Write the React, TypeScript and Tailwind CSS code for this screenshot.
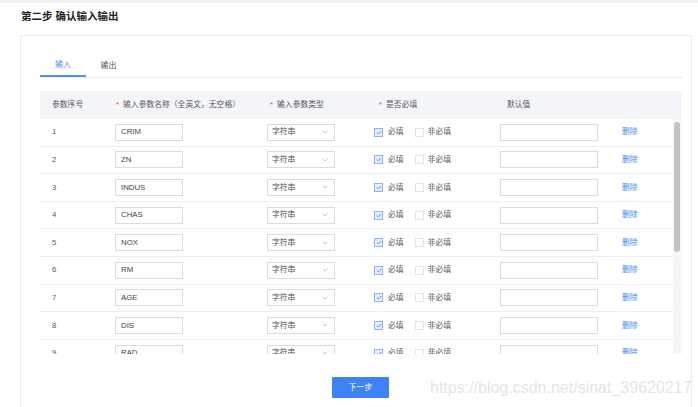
import React from 'react';

const rows = ['CRIM', 'ZN', 'INDUS', 'CHAS', 'NOX', 'RM', 'AGE', 'DIS', 'RAD', 'TAX'];

function Checked() {
  return (
    <span className="flex h-[9px] w-[9px] items-center justify-center border border-[#8fb4f5] bg-[#e6effd]">
      <svg width="6" height="5" viewBox="0 0 6 5" fill="none">
        <path d="M0.8 2.4 L2.4 3.9 L5.2 1" stroke="#4a86f0" strokeWidth="0.9" />
      </svg>
    </span>
  );
}

function Star() {
  return <span className="mr-[4px] text-[#f5475b]">*</span>;
}

export default function App() {
  return (
    <div
      className="h-[407px] w-[698px] overflow-hidden bg-white text-[#333]"
      style={{ fontFamily: '"Liberation Sans", "Noto Sans CJK SC", sans-serif' }}
    >
      <div className="h-[3px] bg-[#f2f2f2]" />
      <div className="flex h-[27px] items-center pl-[21px] text-[10.5px] font-semibold text-[#222]">
        第二步 确认输入输出
      </div>
      <div className="mt-[5px] ml-[20px] h-[375px] w-[672px] border border-[#ececec] bg-white pl-[19px] pr-[8px]">
        {/* tabs */}
        <div className="mt-[19px] flex h-[23px] border-b border-[#ececec] text-[8px]">
          <div className="flex w-[46px] items-center justify-center border-b-2 border-[#4d8ff5] text-[#4d8ff5]">
            输入
          </div>
          <div className="flex w-[45px] items-center justify-center text-[#555]">输出</div>
        </div>

        {/* table */}
        <div className="mt-[13px] w-[642px] text-[7.8px] text-[#5a5a5a]">
          <div className="grid h-[28px] grid-cols-[75px_152px_107px_126px_122px_1fr] items-center bg-[#f3f5f8]">
            <div className="pl-[12px]">参数序号</div>
            <div className="pl-[1px]"><Star />输入参数名称（全英文，无空格）</div>
            <div className="pl-[3px]"><Star />输入参数类型</div>
            <div className="pl-[5px]"><Star />是否必填</div>
            <div className="pl-[7px]">默认值</div>
            <div />
          </div>
          <div className="flex h-[235px] overflow-hidden">
            <div className="w-[633px]">
              {rows.map((name, i) => (
                <div
                  key={name}
                  className="grid h-[27.6px] shrink-0 grid-cols-[75px_152px_107px_126px_122px_1fr] items-center border-b border-[#eeeeee]"
                >
                  <div className="pl-[12px]">{i + 1}</div>
                  <div>
                    <div className="flex h-[17px] w-[68px] items-center border border-[#dcdcdc] pl-[5px] text-[#444]">
                      {name}
                    </div>
                  </div>
                  <div>
                    <div className="flex h-[17px] w-[68px] items-center justify-between border border-[#dcdcdc] pl-[4px] pr-[6px] text-[#555]">
                      <span>字符串</span>
                      <svg width="6" height="4" viewBox="0 0 6 4" fill="none">
                        <path d="M0.5 0.7 L3 3 L5.5 0.7" stroke="#aaa" strokeWidth="0.7" />
                      </svg>
                    </div>
                  </div>
                  <div className="flex items-center">
                    <Checked />
                    <span className="ml-[5px]">必填</span>
                    <span className="ml-[11px] h-[9px] w-[9px] border border-[#e3e3e3] bg-white" />
                    <span className="ml-[4px]">非必填</span>
                  </div>
                  <div>
                    <div className="h-[17px] w-[98px] border border-[#dcdcdc]" />
                  </div>
                  <div className="text-[#3d8bf0]">删除</div>
                </div>
              ))}
            </div>
            <div className="w-[9px] bg-[#f7f7f7] pl-[1px] pt-[3px]">
              <div className="h-[130px] w-[6px] rounded-[3px] bg-[#c4c4c4]" />
            </div>
          </div>
        </div>

        {/* footer */}
        <div className="mt-[23px] flex items-center">
          <div className="flex w-[349px] shrink-0 justify-end">
            <button className="h-[21px] w-[57px] rounded-[1px] bg-[#3f82f5] text-[8px] text-white">
              下一步
            </button>
          </div>
          <div className="ml-[41px] shrink-0 whitespace-nowrap text-[16px] leading-[20px] text-[#e6e6e6]">
            https://blog.csdn.net/sinat_39620217
          </div>
        </div>
      </div>
    </div>
  );
}
